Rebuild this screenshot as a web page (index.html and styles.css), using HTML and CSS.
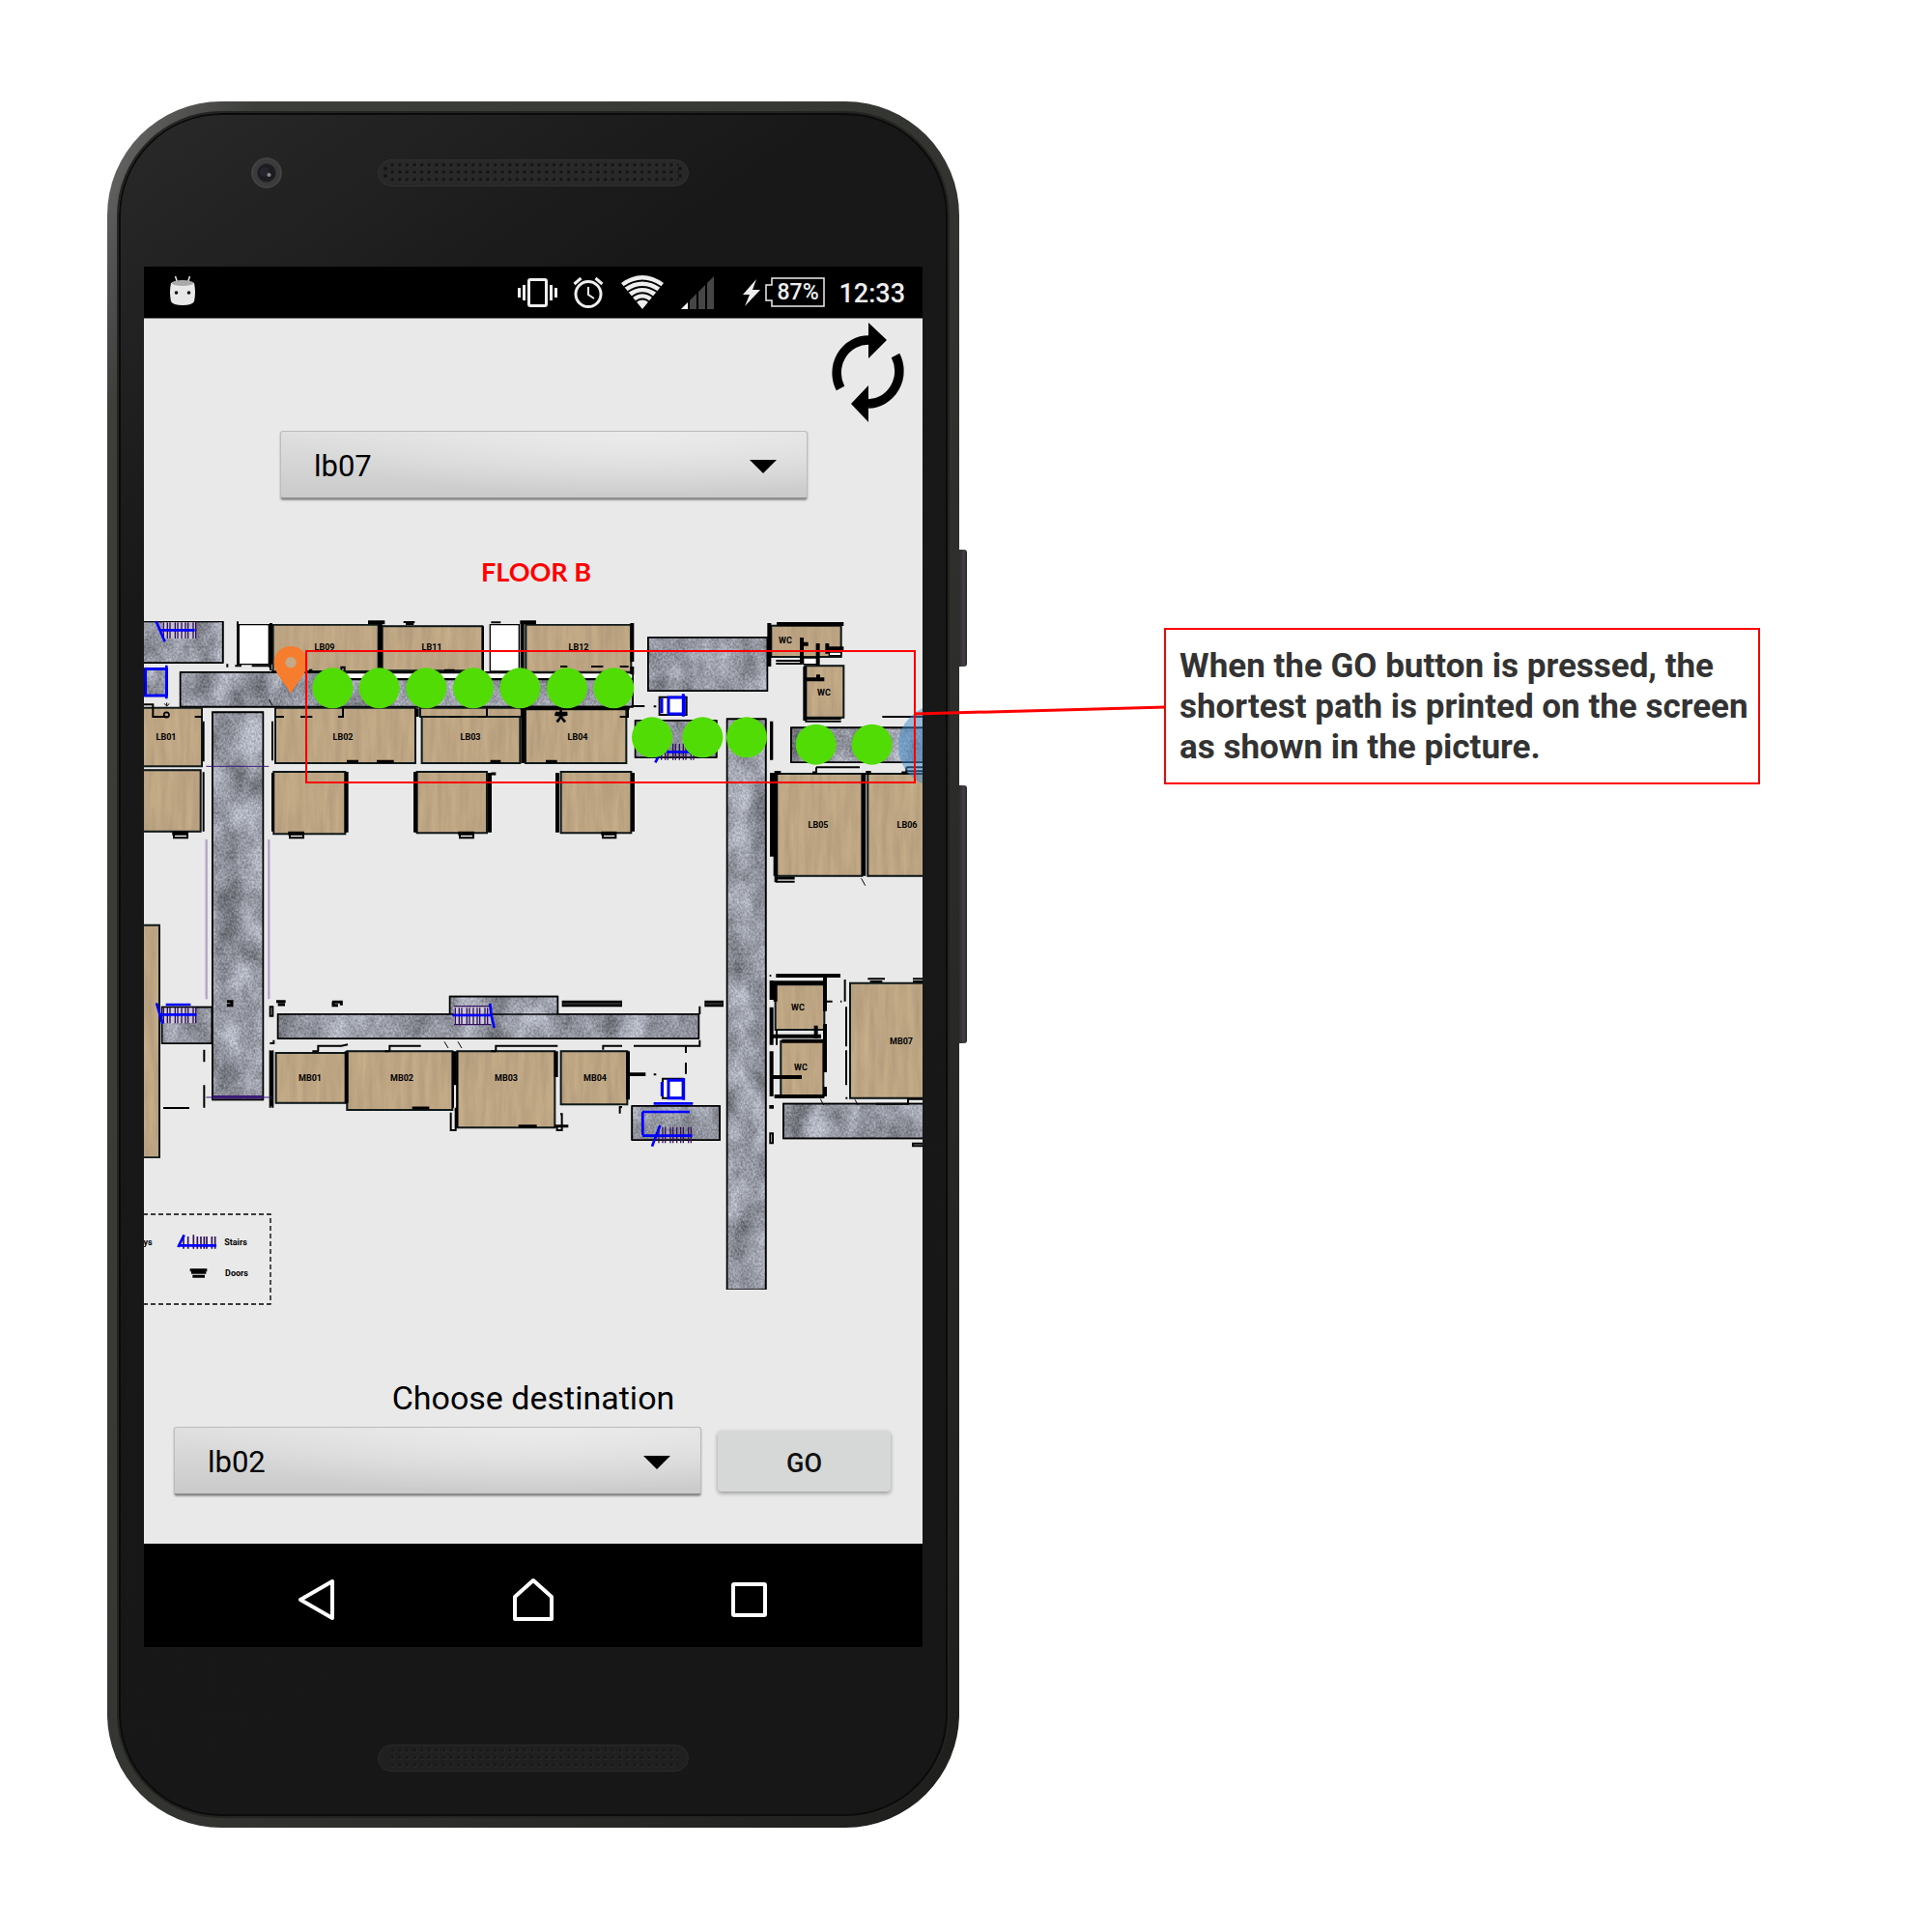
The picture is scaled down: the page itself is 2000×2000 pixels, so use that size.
FILE: index.html
```html
<!DOCTYPE html>
<html lang="en">
<head>
<meta charset="utf-8">
<title>Indoor navigation</title>
<link rel="stylesheet" href="styles.css">
</head>
<body>
<main class="stage">
  <section class="phone">
    <span class="side-key side-key-power"></span>
    <span class="side-key side-key-volume"></span>
    <div class="face">
      <div class="bezel-top">
        <svg class="camera" viewBox="0 0 32 32" aria-hidden="true"><circle cx="16" cy="16" r="16" fill="#3b3b3b"/><circle cx="16" cy="16" r="15" fill="none" stroke="#484848"/><circle cx="16" cy="16" r="9.500" fill="#1c1b20" stroke="#2b2b2d"/><circle cx="14" cy="15" r="5" fill="#26252e"/><circle cx="18.500" cy="18" r="2" fill="#8d8b8b"/></svg>
        <svg class="speaker" viewBox="0 0 322 28" aria-hidden="true">
          <defs><pattern id="holes" x="11.500" y="2" width="7.600" height="7.500" patternUnits="userSpaceOnUse"><circle cx="4.100" cy="4.200" r="2.300" fill="#343434"/><circle cx="3.800" cy="3.800" r="2" fill="#151515"/></pattern></defs>
          <rect x=".5" y=".5" width="321" height="27" rx="13.500" fill="#282828" stroke="#303030"/>
          <rect x="11.500" y="2" width="300" height="22.500" fill="url(#holes)"/>
          <g fill="#151515"><circle cx="8" cy="9.500" r="2"/><circle cx="8" cy="17" r="2"/><circle cx="313" cy="9.500" r="2"/><circle cx="313" cy="17" r="2"/></g>
        </svg>
      </div>
      <div class="screen">
        <div class="status">
          <svg class="robot" width="26" height="32" viewBox="0 0 26 32" aria-hidden="true"><path d="M5.500 1l2 6M20.500 1l-2 6" stroke="#e8e8e8" stroke-width="1.500"/><path d="M1 8Q13 3 25 8Q27 18 25 27Q23 31 13 31Q3 31 1 27Q-1 18 1 8Z" fill="#e8e8e8"/><ellipse cx="13" cy="8" rx="11.500" ry="3" fill="#aaa"/><circle cx="6.500" cy="18" r="1.800"/><circle cx="19.500" cy="18" r="1.800"/></svg>
          <span class="status-icons">
            <svg width="41" height="32" viewBox="0 0 41 32" aria-hidden="true"><rect x="11.500" y="2.500" width="18" height="27" rx="1.500" fill="none" stroke="#eee" stroke-width="3"/><path d="M1.500 11v10M6.500 8v16M34.500 8v16M39.500 11v10" stroke="#eee" stroke-width="3"/></svg>
            <svg width="32" height="34" viewBox="0 0 32 34" aria-hidden="true"><g fill="none" stroke="#eee" stroke-width="3"><circle cx="16" cy="18.500" r="13"/><path d="M16 11v8l6 4" stroke-width="2"/><path d="M1.500 8l7-6M30.500 8l-7-6"/></g></svg>
            <svg class="wifi" width="44" height="37" viewBox="0 0 44 37" aria-hidden="true"><path d="M0 9Q22-7 44 9L22 36Z" fill="#eee"/><g fill="none" stroke="#000" stroke-width="2"><path d="M3 13Q22 0 41 13M7 18Q22 8 37 18M11 23.500Q22 15 33 23.500M14 29Q22 22 30 29"/></g></svg>
            <svg width="34" height="34" viewBox="0 0 34 34" aria-hidden="true"><path d="M0 34l7-7v7z" fill="#fff"/><path d="M9 34V25l7-7v16zM18 34V16l7-7v25zM27 34V7l7-7v34z" fill="#464646"/></svg>
            <svg class="bolt" width="18" height="28" viewBox="0 0 18 28" aria-hidden="true"><path d="M14 0L0 16h7L2 28 18 11H10z" fill="#eee"/></svg>
            <span class="battery"><svg width="62" height="31" viewBox="0 0 62 31" aria-hidden="true"><path d="M7 1h54v29H7v-6H1V8h6z" fill="none" stroke="#eee" stroke-width="1.500"/></svg><span class="battery-level">87%</span></span>
            <time class="clock">12:33</time>
          </span>
        </div>
        <div class="app">
          <button class="refresh" type="button" aria-label="Refresh">
            <svg viewBox="0 0 76 103" aria-hidden="true"><g fill="none" stroke="#000" stroke-width="9.500"><path d="M38 18A33 34 0 0 0 9 68"/><path d="M38 84A33 34 0 0 0 66 34"/></g><path d="M38 0L57 18 38 37ZM38 65V103L20 84Z"/></svg>
          </button>
          <div class="picker picker-start">
            <select class="picker-select" aria-label="Starting point"><option>lb07</option></select>
          </div>
          <svg class="map" viewBox="149 560 806 820" role="img" aria-label="Floor plan">
            <defs>
              <filter id="stone" x="0" y="0" width="1" height="1" color-interpolation-filters="sRGB">
                <feTurbulence type="fractalNoise" baseFrequency=".012 .008" numOctaves="6" seed="4"/>
                <feColorMatrix values="1.700 0 0 0 -.3 1.700 0 0 0 -.3 1.700 0 0 0 -.3 0 0 0 0 1" result="patches"/>
                <feTurbulence type="fractalNoise" baseFrequency=".16 .13" numOctaves="2" seed="7"/>
                <feColorMatrix values="1.400 0 0 0 -.2 1.400 0 0 0 -.2 1.400 0 0 0 -.2 0 0 0 0 1" result="grain"/>
                <feComposite in="patches" in2="grain" operator="arithmetic" k2=".55" k3=".45" result="n"/>
                <feComposite in="SourceGraphic" in2="n" operator="arithmetic" k1="1" k2=".55"/>
              </filter>
              <filter id="wood" x="0" y="0" width="1" height="1" color-interpolation-filters="sRGB">
                <feTurbulence type="fractalNoise" baseFrequency=".05 .006" numOctaves="4" seed="9"/>
                <feColorMatrix values="1 0 0 0 0 1 0 0 0 0 1 0 0 0 0 0 0 0 0 1" result="n"/>
                <feComposite in="SourceGraphic" in2="n" operator="arithmetic" k1=".16" k2=".92"/>
              </filter>
              <g id="steps"><path d="M4 0v50M16 0v50M24 0v50M40 0v50M48 0v50M60 0v50M72 0v50M80 0v50M96 0v50M104 0v50" stroke="#32105f" stroke-width="4"/></g>
            </defs>
            <text class="floor-name" x="555" y="602">FLOOR B</text>
            <g transform="translate(140 620) scale(.33333)">
              <g class="hall" filter="url(#stone)">
                <path d="M10 70H272V198H10ZM140 228H1545V335H140ZM240 352H397V1555H240ZM1593 120H1963V285H1593ZM1553 378H1805V492H1553ZM1838 373H1958V2145H1838ZM2037 400H2460V507H2037ZM83 1268H238V1380H83ZM977 1235H1312V1290H977ZM443 1290H1750V1365H443ZM1543 1575H1815V1680H1543ZM2013 1568H2460V1675H2013Z"/>
                <path d="M32 218H97V300H32Z" class="lift"/>
              </g>
              <g class="room" filter="url(#wood)">
                <path d="M0 338H207V520H0ZM0 532H203V722H0ZM428 80H755V225H428ZM767 85H1078V223H767ZM1213 80H1540V227H1213ZM435 338H870V510H435ZM885 338H1200V366H885ZM890 366H1195V510H890ZM1212 343H1525V510H1212ZM430 537H652V730H430ZM875 537H1092V727H875ZM1322 537H1540V727H1322ZM1975 83H2192V180H1975ZM2080 208H2200V368H2080ZM1993 543H2257V860H1993ZM2275 543H2460V860H2275ZM0 1013H75V1735H0ZM437 1410H655V1565H437ZM658 1405H985V1587H658ZM1000 1405H1303V1642H1000ZM1322 1405H1528V1570H1322ZM1988 1198H2140V1338H1988ZM2005 1373H2137V1545H2005ZM2220 1193H2460V1550H2220Z"/>
              </g>
              <g class="void">
                <path d="M322 80H415V203H322ZM1102 80H1192V225H1102ZM640 230H1545V248H640ZM2075 183H2120V203H2075ZM2155 165H2192V176H2155Z"/>
              </g>
              <g class="wall thick">
                <path d="M761 75V228M723 73H775M1195 73H1245M1202 78V228M1543 75V195M1543 210V235M1204 340V510M1195 338H1535M656 537V725M870 537V725M1969 75V210M1992 78H2200M2070 120V200M2120 138V206M2149 138V170M2075 140H2090M2150 154H2200M2080 210V378M2080 250H2140M2121 235V250M2263 540V860M2269 540H2285M1985 540H2005M1988 540V860M992 1405V1510M1307 1405V1485M1530 1405V1555M1982 1192H2142M1988 1190V1250M1990 1170H2190M1980 1358H2130M2114 1325V1365M1985 1545H2140M1980 1485H2070M2142 1175V1280M2142 1320V1470M2142 1515V1545M2008 1373H2142M1976 1185V1245M1976 1268V1385M1976 1405V1545M656 1405V1565M423 1405V1575"/>
              </g>
              <g class="wall">
                <path d="M212 380V505M212 538V722M426 380V502M426 540V722M420 75V215M423 75V203M318 70V210M1080 85V225M672 250H1548M425 228H640M1092 340V366M872 340V366M878 340V366M1098 540V725M1104 540V725M1308 540V725M1314 540V725M1542 540V722M1548 540V722M1540 333H1582M1610 334H1618M1990 192H2072M1990 201H2072M1974 380V500M1978 380V500M1974 540V800M1980 540V800M1988 800V880M2080 372H2192M2080 380H2192M2320 366H2460M2115 523H2250M2115 523V543M2395 523H2460M2395 523V543M2395 535H2460M27 328H55V366H105M185 366H207M435 366H462M513 366H550M630 366H645V338M540 221H550M640 222V212H650V222M960 221H992M1320 210H1342M1416 210H1453M1505 210H1532M975 366H1010M1065 366H1090M1505 366H1530V340M833 72H868M840 78H865M286 202V212M310 208H330M362 208H420V222M1105 73H1135M214 1400V1438M214 1510V1580M87 1581H168M419 1402V1580M427 1402V1580M419 1267H427V1295H419ZM418 1380H430V1370M987 1405V1580M1000 1405V1640M980 1595V1650H995V1580M568 1405V1388H640L660 1384M550 1405H570M790 1405V1388H887M775 1405H790M1120 1405V1388H1312M1105 1405H1120M1453 1400V1388H1512M1548 1388H1753V1370M1753 1265V1290M1710 1390V1410M1710 1440V1475M1532 1474H1582V1479H1532M1610 1477H1618M1512 1578H1505V1598M1320 1600H1325V1650H1310V1635M1970 1170H1975M2204 1182V1250M2208 1267V1390M2208 1402V1510M2206 1550H2212M2145 1250H2165M2190 1250H2194M2275 1180H2328M2282 1188H2320M2415 1180H2460M2415 1188H2460M1992 1338V1385M1972 1575H1980V1580H1972ZM1972 1660H1980V1690H1972ZM2415 1691H2460V1699H2415ZM2300 1568H2400V1553H2460"/>
                <path d="M115 725H162V742H120V730M475 725H522V742H480V730M1003 725H1050V742H1008V730M1447 725H1492V742H1452V730M1992 862V878H2048"/>
              </g>
              <g class="door">
                <path d="M657 505H693M750 505H803M1103 505H1135M1275 505H1310M860 1581H913M1190 1637H1247M1303 1637H1345M115 730H162M475 730H522M1003 730H1050M1447 730H1492M1992 867H2048M1105 543H1120M1305 355H1342M2103 540H2118M2380 540H2395"/>
                <path d="M1325 1257H1512M1768 1257H1827" stroke-width="20"/>
                <path d="M170 2084H223M174 2092H220M178 2104H216M285 1250H300V1262H285M438 1250H467M443 1260H465M612 1252H640V1262M615 1250V1262H630"/>
              </g>
              <path d="M1328 1257H1509M1771 1257H1824" stroke="#555" stroke-width="3"/>
              <path d="M1322 345V370M1322 362L1303 358M1322 362L1342 358M1322 366L1310 382M1322 366L1335 382" stroke="#000" stroke-width="8"/>
              <path d="M98 322v10M90 325l8 8 8-8M415 210l12 15M415 312l10 18M960 1375l12 20M1002 1375l12 20M2255 868l12 22M2128 1553l10 19M2235 1555l10 17" class="wall-fine"/>
              <circle cx="97" cy="360" r="8" fill="none" stroke="#000" stroke-width="5"/>
              <g class="purple"><path d="M220 520H415M220 1548H425"/><path d="M221 747V1243M415 747V1243" class="pale"/><path d="M242 1547H396" stroke-width="10"/></g>
              <path d="M85 72H187V124H85ZM85 1270H187V1317H85ZM990 1265H1105V1322H990Z" fill="#e4dfe8" fill-opacity=".65"/>
              <use href="#steps" x="84" y="73"/><use href="#steps" x="84" y="1268"/><use href="#steps" x="990" y="1270"/><use href="#steps" x="1630" y="450"/><use href="#steps" x="1622" y="1640"/>
              <path d="M150 1980v38M164 1980v38M181 1975v43M193 1980v38M204 1980v38M214 1980v38M222 1980v38M238 1980v38M248 1980v38" stroke="#32105f" stroke-width="5"/>
              <path d="M990 1265H1105M990 1322H1105" stroke="#32105f" stroke-width="4"/>
              <g class="blue">
                <path d="M65 70L92 133M75 97H185M66 1255L85 1320M75 1291H190M95 1260H172M985 1293H1105M1102 1257L1105 1290 1115 1332M1650 475H1735M1615 508L1625 490M133 2013L152 1975M135 2008H252M97 206V310M27 300H97M1575 1667H1730M1575 1593H1722M1576 1593V1666M1605 1700L1630 1635M1610 1567H1732"/>
              </g>
              <path d="M1632 305H1712V360H1628V305ZM1638 1490H1700V1550H1638Z" fill="#fff" stroke="#000" stroke-width="6"/>
              <path d="M1635 308V355M1656 306H1705V357H1656ZM1702 295V365M1656 1495H1703V1550H1656ZM1703 1488V1556M1636 1500V1545" fill="none" stroke="#00f" stroke-width="9"/>
              <path d="M0 1911H420V2190H0" fill="none" stroke="#000" stroke-width="4" stroke-dasharray="15 9"/>
              <circle cx="2497" cy="457" r="128" fill="#3f89ca" fill-opacity=".5"/>
              <path d="M483 295C468 262 431 235 431 195A52 48 0 0 1 535 195C535 235 498 262 483 295Z" fill="#f57d2d"/>
              <circle cx="483" cy="197" r="17" fill="#c6a987"/>
            </g>
            <g class="room-names">
              <text x="336" y="673">LB09</text><text x="447" y="673">LB11</text><text x="599" y="673">LB12</text>
              <text x="172" y="766">LB01</text><text x="355" y="766">LB02</text><text x="487" y="766">LB03</text><text x="598" y="766">LB04</text>
              <text x="813" y="666">WC</text><text x="853" y="720">WC</text><text x="847" y="857">LB05</text><text x="939" y="857">LB06</text>
              <text x="321" y="1119">MB01</text><text x="416" y="1119">MB02</text><text x="524" y="1119">MB03</text><text x="616" y="1119">MB04</text>
              <text x="933" y="1081">MB07</text><text x="826" y="1046">WC</text><text x="829" y="1108">WC</text>
              <text x="153" y="1289">ys</text><text x="244" y="1289">Stairs</text><text x="245" y="1321">Doors</text>
            </g>
            <g transform="translate(140 620) scale(.33333)">
              <g fill="#52dc05"><circle cx="613" cy="277" r="63"/><circle cx="758" cy="277" r="63"/><circle cx="904" cy="277" r="63"/><circle cx="1050" cy="277" r="63"/><circle cx="1195" cy="277" r="63"/><circle cx="1341" cy="277" r="63"/><circle cx="1486" cy="277" r="63"/><circle cx="1605" cy="430" r="63"/><circle cx="1762" cy="430" r="63"/><circle cx="1899" cy="430" r="63"/><circle cx="2114" cy="452" r="63"/><circle cx="2288" cy="452" r="63"/></g>
              <rect x="531" y="162" width="1890" height="408" fill="none" stroke="#f00" stroke-width="6"/>
            </g>
          </svg>
          <label class="destination-label" for="destination">Choose destination</label>
          <div class="destination-row">
            <div class="picker"><select class="picker-select" id="destination"><option>lb02</option></select></div>
            <button class="go" type="button">GO</button>
          </div>
        </div>
        <nav class="nav">
          <button class="nav-key" type="button" aria-label="Back"><svg viewBox="0 0 44 46" aria-hidden="true"><path d="M38 4V42L5 23Z"/></svg></button>
          <button class="nav-key" type="button" aria-label="Home"><svg viewBox="0 0 44 46" aria-hidden="true"><path d="M22 3L41 20V43H3V20Z"/></svg></button>
          <button class="nav-key" type="button" aria-label="Recent"><svg viewBox="0 0 44 46" aria-hidden="true"><rect x="5" y="7" width="33" height="32" rx="1"/></svg></button>
        </nav>
      </div>
      <div class="bezel-bottom">
        <svg class="speaker" viewBox="0 0 322 28" aria-hidden="true">
          <rect x=".5" y=".5" width="321" height="27" rx="13.500" fill="#202020" stroke="#2a2a2a"/>
          <rect x="11.500" y="2" width="300" height="22.500" fill="url(#holes)" opacity=".7"/>
        </svg>
      </div>
    </div>
  </section>
  <aside class="callout">
    <svg class="connector" viewBox="0 0 260 12" preserveAspectRatio="none" aria-hidden="true"><path d="M0 9L260 2" stroke="#f00" stroke-width="3"/></svg>
    <p class="callout-text">When the GO button is pressed, the shortest path is printed on the screen as shown in the picture.</p>
  </aside>
</main>
</body>
</html>
```
FILE: styles.css
```css
* { box-sizing: border-box; }
body { margin: 0; background: #fff; font-family: Roboto, "Liberation Sans", sans-serif; color: #000; }
button { border: 0; padding: 0; background: none; font: inherit; color: inherit; }
svg { display: block; }

.stage { display: flex; align-items: flex-start; padding: 105px 178px 107px 111px; }

.phone {
  position: relative;
  flex: 0 0 882px;
  padding: 12px;
  border-radius: 118px;
  background: linear-gradient(115deg, #6d6d6d 0, #3c3e3a 9%, #373935 40%, #2c2d2a 70%, #1e1e1c 100%);
}
.side-key { position: absolute; left: 100%; width: 8px; border-radius: 0 3px 3px 0; background: linear-gradient(90deg, #2f2b31, #453e47 60%, #2a262b); }
.side-key-power { top: 464px; height: 113px; }
.side-key-power { height: 121px; }
.side-key-volume { top: 708px; height: 267px; }

.face {
  padding: 0 24px;
  border: 2px solid #0b0b0b;
  border-radius: 106px;
  background: linear-gradient(145deg, #292929 0, #181818 22%, #171717 100%);
  box-shadow: 0 0 0 2px #232421;
}
.bezel-top { display: grid; grid-template-columns: 1fr 322px 1fr; align-items: center; height: 157px; padding-bottom: 38px; }
.camera { width: 32px; margin-left: 111px; }
.speaker { width: 322px; height: 28px; }
.bezel-bottom { display: flex; justify-content: center; padding: 101px 0 44px; }

.screen { background: #e9e9e9; }
.status { display: flex; align-items: center; justify-content: space-between; height: 54px; padding: 0 18px 0 27px; background: #000; border-bottom: 1px solid #777; color: #eee; }
.status-icons { display: flex; align-items: center; gap: 16px; }
.robot { margin-bottom: 4px; }
.wifi { margin: 0 2px; }
.bolt { margin-left: 14px; margin-right: -11px; }
.battery { display: grid; align-items: center; margin-right: -2px; }
.battery svg, .battery-level { grid-area: 1 / 1; }
.battery-level { padding-left: 12px; font-size: 23px; line-height: 28px; font-weight: 500; }
.clock { padding-top: 2px; font-size: 27px; line-height: 32px; font-weight: 500; }

.app { display: flex; flex-direction: column; padding-top: 4px; padding-bottom: 50px; }
.refresh { align-self: flex-end; width: 76px; height: 103px; margin-right: 18px; }
.picker { position: relative; flex: 0 1 546px; }
.picker-start { align-self: center; width: 546px; flex: none; margin: 9px 0 43px 22px; }
.picker::after { content: ""; position: absolute; right: 32px; top: 30px; width: 28px; height: 14px; background: #000; clip-path: polygon(0 0, 100% 0, 50% 100%); pointer-events: none; }
.picker-select {
  appearance: none;
  display: block;
  width: 100%;
  height: 71px;
  padding: 2px 34px 0;
  border: 1px solid #bdbdbd;
  border-bottom: 2px solid #8d8d8d;
  border-radius: 3px;
  background: radial-gradient(ellipse at 68% 0, #ebebeb 0, rgba(235, 235, 235, 0) 70%), linear-gradient(#e0e0e0, #cacaca);
  box-shadow: 0 1px 2px rgba(0, 0, 0, .35);
  font-family: inherit;
  font-size: 31px;
  color: #000;
}
.map { width: 100%; height: auto; }
.floor-name { font: 700 27px Lato, sans-serif; fill: #f00; text-anchor: middle; }
.room-names { font: 700 9px Roboto, sans-serif; text-anchor: middle; }
.hall { fill: #8b8e97; stroke: #000; stroke-width: 5; }
.lift { stroke: #00f; stroke-width: 8; }
.room { fill: #bda583; stroke: #10191a; stroke-width: 6; }
.void { fill: #fff; stroke: #000; stroke-width: 4; }
.wall { fill: none; stroke: #000; stroke-width: 6; }
.wall.thick { stroke-width: 12; }
.wall-fine { fill: none; stroke: #000; stroke-width: 3; }
.door { fill: none; stroke: #000; stroke-width: 9; }
.purple { stroke: #3c1a78; stroke-width: 3; }
.purple .pale { stroke: #b3a3c9; stroke-width: 7; }
.blue { fill: none; stroke: #00f; stroke-width: 8; }

.destination-label { align-self: center; margin-top: 45px; font-size: 34px; line-height: 44px; }
.destination-row { display: flex; align-items: center; gap: 17px; margin-top: 8px; padding: 0 33px 0 31px; }
.go { flex: 1; height: 63px; padding-top: 4px; border-radius: 4px; background: #d6d8d7; box-shadow: 0 2px 4px rgba(0, 0, 0, .35); font-size: 27px; font-weight: 500; color: #111; }

.nav { display: flex; justify-content: center; align-items: center; gap: 180px; height: 107px; padding-top: 8px; background: #000; }
.nav-key { width: 44px; }
.nav-key svg { fill: none; stroke: #fff; stroke-width: 4; stroke-linejoin: round; }

.callout { position: relative; flex: 1; margin: 545px 0 0 212px; padding: 17px 4px 15px 14px; border: 2px solid #f00; }
.callout-text { margin: 0; font-size: 35px; line-height: 42px; font-weight: 700; color: #333; }
.connector { position: absolute; right: 100%; top: 78px; width: 260px; height: 12px; }
```
